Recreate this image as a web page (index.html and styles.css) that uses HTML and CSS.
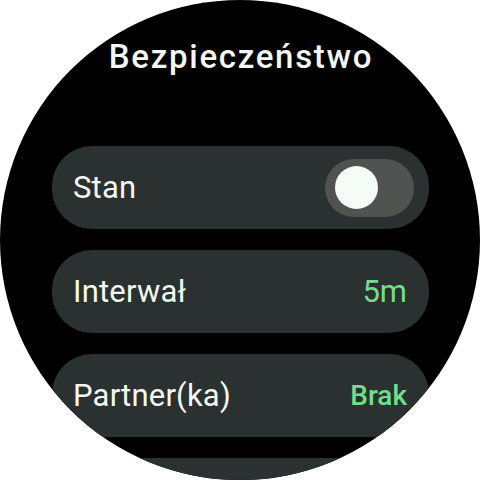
FILE: index.html
```html
<!DOCTYPE html>
<html lang="pl">
<head>
<meta charset="utf-8">
<link rel="stylesheet" href="styles.css">
</head>
<body>
<div class="watch">
  <h1 class="title">Bezpieczeństwo</h1>
  <div class="list">
    <div class="card">
      <span class="label">Stan</span>
      <span class="toggle"><span class="thumb"></span></span>
    </div>
    <div class="card">
      <span class="label">Interwał</span>
      <span class="value">5m</span>
    </div>
    <div class="card">
      <span class="label">Partner(ka)</span>
      <span class="value small">Brak</span>
    </div>
    <div class="card"></div>
  </div>
</div>
</body>
</html>
```

FILE: styles.css
```css
html, body {
  margin: 0;
  padding: 0;
  background: #ffffff;
}
.watch {
  width: 480px;
  height: 480px;
  border-radius: 50%;
  background: #000000;
  overflow: hidden;
  font-family: Roboto, "Noto Sans", sans-serif;
  color: #f3f8f3;
}
.title {
  margin: 0;
  padding: 37px 0 0 2px;
  height: 146px;
  box-sizing: border-box;
  text-align: center;
  font-size: 33px;
  font-weight: 500;
  line-height: 40px;
  letter-spacing: 1.7px;
}
.list {
  display: flex;
  flex-direction: column;
  gap: 21px;
  margin: 0 51px 0 52px;
}
.card {
  height: 83px;
  flex-shrink: 0;
  border-radius: 40px;
  background: #2a3130;
  display: flex;
  align-items: center;
  justify-content: space-between;
  padding: 0 22px 0 21px;
}
.label {
  font-size: 31px;
  font-weight: 400;
  line-height: 40px;
  letter-spacing: 0.2px;
}
.value {
  color: #71df8b;
  font-size: 31px;
  font-weight: 400;
  line-height: 40px;
}
.value.small {
  font-size: 28px;
  font-weight: 500;
}
.toggle {
  width: 89px;
  height: 58px;
  border-radius: 29px;
  background: #4f5450;
  display: flex;
  align-items: center;
  padding-left: 10px;
  box-sizing: border-box;
  margin-right: -7px;
}
.thumb {
  width: 43px;
  height: 43px;
  border-radius: 50%;
  background: #f5fbf5;
}
```
